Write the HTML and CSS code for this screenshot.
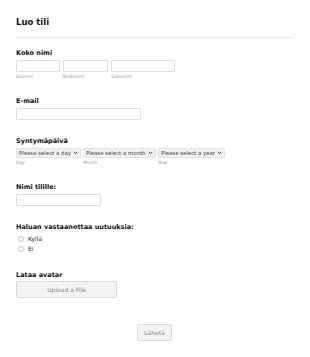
FILE: index.html
```html
<!DOCTYPE html>
<html lang="fi">
<head>
    <meta charset="UTF-8">
    <meta name="viewport" content="width=device-width, initial-scale=1.0">
    <title>Luo tili</title>
    <link rel="stylesheet" href="styles.css">
</head>
<body>
    <form class="signup">
        <div class="form-header">
            <h1>Luo tili</h1>
        </div>

        <div class="field field-name">
            <label class="field-label">Koko nimi</label>
            <div class="name-row">
                <div class="sub first">
                    <input type="text">
                    <span class="sublabel">Etunimi</span>
                </div>
                <div class="sub middle">
                    <input type="text">
                    <span class="sublabel">Keskinimi</span>
                </div>
                <div class="sub last">
                    <input type="text">
                    <span class="sublabel">Sukunimi</span>
                </div>
            </div>
        </div>

        <div class="field">
            <label class="field-label">E-mail</label>
            <input type="text" class="email">
        </div>

        <div class="field">
            <label class="field-label">Syntymäpäivä</label>
            <div class="date-row">
                <div class="sub">
                    <select><option>Please select a day</option></select>
                    <span class="sublabel">Day</span>
                </div>
                <div class="sub">
                    <select><option>Please select a month</option></select>
                    <span class="sublabel">Month</span>
                </div>
                <div class="sub">
                    <select><option>Please select a year</option></select>
                    <span class="sublabel">Year</span>
                </div>
            </div>
        </div>

        <div class="field">
            <label class="field-label">Nimi tilille:</label>
            <input type="text" class="account">
        </div>

        <div class="field">
            <label class="field-label">Haluan vastaanottaa uutuuksia:</label>
            <div class="radio-list">
                <label class="radio"><span class="dot"></span>Kyllä</label>
                <label class="radio"><span class="dot"></span>Ei</label>
            </div>
        </div>

        <div class="field field-upload">
            <label class="field-label">Lataa avatar</label>
            <button type="button" class="upload">Upload a File</button>
        </div>

        <div class="submit-row">
            <button type="submit" class="submit">Lähetä</button>
        </div>
    </form>
</body>
</html>
```

FILE: styles.css
```css
body {
    font-family: "DejaVu Sans", Verdana, sans-serif;
    background-color: #fff;
    color: #000;
    margin: 0;
}
.signup {
    padding: 16px 17px 0 16px;
}
.form-header {
    padding-bottom: 9px;
    border-bottom: 1px solid #ececec;
}
.form-header h1 {
    margin: 0;
    font-size: 8.5px;
    line-height: 12px;
    font-weight: bold;
    color: #111;
}
.field {
    margin-top: 10px;
}
.field + .field {
    margin-top: 16px;
}
.field-label {
    display: block;
    font-size: 6.5px;
    line-height: 10px;
    font-weight: bold;
    color: #111;
    margin-bottom: 2px;
}
input[type="text"] {
    display: block;
    box-sizing: border-box;
    height: 12px;
    margin: 0;
    padding: 0 3px;
    border: 1px solid #dcdcdc;
    border-radius: 1px;
    background: #fff;
}
.name-row,
.date-row {
    display: flex;
    gap: 3px;
}
.date-row {
    gap: 2px;
}
.sub {
    display: flex;
    flex-direction: column;
}
.sub.first input { width: 44px; }
.sub.middle input { width: 45px; }
.sub.last input { width: 64px; }
.sublabel {
    font-size: 4.5px;
    line-height: 7px;
    color: #999;
    margin-top: 1px;
}
.email {
    width: 125px;
}
.account {
    width: 85px;
}
select {
    -webkit-appearance: none;
    appearance: none;
    box-sizing: border-box;
    height: 10px;
    margin: 0;
    padding: 0 9px 0 2px;
    font-family: "DejaVu Sans", Verdana, sans-serif;
    font-size: 5.4px;
    color: #444;
    border: 1px solid #e2e2e2;
    border-radius: 1px;
    background: #f1f1f1 url("data:image/svg+xml;utf8,<svg xmlns='http://www.w3.org/2000/svg' width='5' height='4'><path d='M0.8 1l1.7 1.7 1.7-1.7' fill='none' stroke='%23333' stroke-width='1'/></svg>") no-repeat right 2px center;
}
.radio-list {
    margin-top: 0;
}
.radio {
    display: flex;
    align-items: center;
    font-size: 6px;
    line-height: 10px;
    color: #222;
    padding-left: 2px;
}
.dot {
    box-sizing: border-box;
    width: 6px;
    height: 6px;
    border: 1px solid #c8c8c8;
    border-radius: 50%;
    margin-right: 4px;
    background: #fff;
}
.field-upload {
    margin-top: 18px;
}
.field-upload .field-label {
    margin-bottom: 1px;
}
.upload,
.submit {
    display: block;
    box-sizing: border-box;
    height: 17px;
    font-family: "DejaVu Sans", Verdana, sans-serif;
    font-size: 6px;
    color: #888;
    background-color: #f3f3f3;
    border: 1px solid #dadada;
    border-radius: 2px;
    padding: 0;
}
.upload {
    width: 101px;
}
.submit-row {
    display: flex;
    justify-content: center;
    margin-top: 26px;
}
.submit {
    width: 35px;
}
```
